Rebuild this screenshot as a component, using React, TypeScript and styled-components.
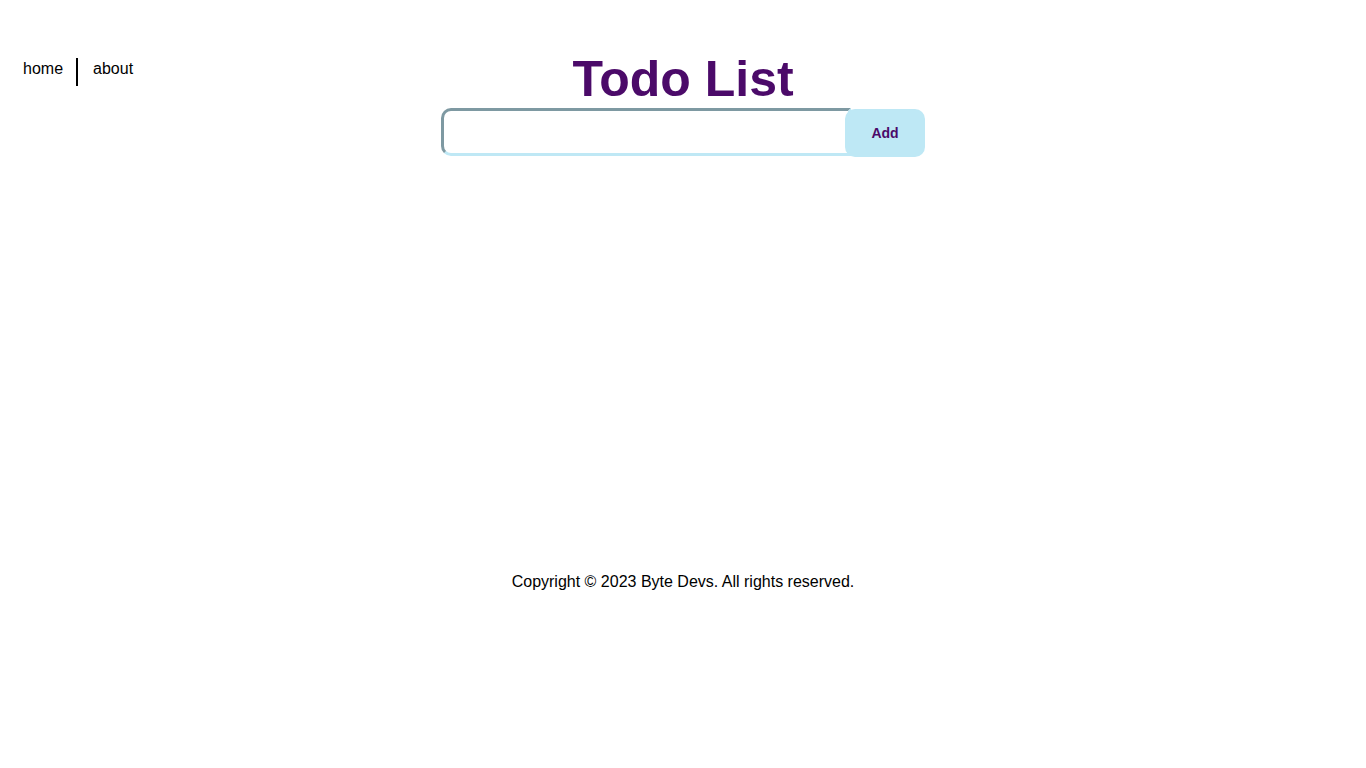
import React from "react";
import styled, { createGlobalStyle } from "styled-components";

const Global = createGlobalStyle`
  html, body { margin: 0; padding: 0; background: #ffffff; }
  body { font-family: "Liberation Sans", Arial, sans-serif; color: #000; }
`;

const Page = styled.div`
  display: flex;
  flex-direction: column;
  min-height: 768px;
`;

const Header = styled.header`
  display: grid;
  grid-template-columns: 1fr auto 1fr;
  align-items: start;
  padding-top: 51px;
`;

const Nav = styled.nav`
  display: flex;
  align-items: flex-start;
  padding-left: 23px;
  margin-top: 7px;
`;

const NavLink = styled.a`
  font-size: 16px;
  line-height: 18px;
  padding-top: 2px;
  color: #000;
  text-decoration: none;
`;

const Divider = styled.span`
  width: 2px;
  height: 28px;
  background: #000;
  margin: 0 15px 0 13px;
`;

const Title = styled.h1`
  margin: 0;
  font-size: 50px;
  line-height: 56px;
  font-weight: 700;
  color: #4b0a69;
  text-align: center;
`;

const Main = styled.main`
  display: flex;
  justify-content: center;
  align-items: flex-start;
  padding-top: 1px;
  min-height: 466px;
  box-sizing: border-box;
`;

const Form = styled.form`
  display: flex;
  align-items: flex-start;
`;

const Input = styled.input`
  box-sizing: border-box;
  width: 410px;
  height: 48px;
  border-width: 3px;
  border-style: solid;
  border-color: #7e99a2 #bfe8f5 #bfe8f5 #7e99a2;
  border-radius: 10px 0 0 10px;
  padding: 0 12px;
  font-size: 16px;
  font-family: inherit;
  outline: none;
  background: #fff;
`;

const AddButton = styled.button`
  box-sizing: border-box;
  width: 80px;
  height: 48px;
  margin-top: 1px;
  margin-left: -6px;
  position: relative;
  border: none;
  border-radius: 10px;
  background: #bee8f5;
  color: #4b0a69;
  font-family: inherit;
  font-size: 14px;
  font-weight: 700;
  cursor: pointer;
`;

const Footer = styled.footer`
  text-align: center;
  font-size: 16px;
  line-height: 18px;
`;

export default function App() {
  return (
    <>
      <Global />
      <Page>
        <Header>
          <Nav>
            <NavLink href="#">home</NavLink>
            <Divider />
            <NavLink href="#">about</NavLink>
          </Nav>
          <Title>Todo List</Title>
          <div />
        </Header>
        <Main>
          <Form onSubmit={(e) => e.preventDefault()}>
            <Input type="text" />
            <AddButton type="submit">Add</AddButton>
          </Form>
        </Main>
        <Footer>Copyright © 2023 Byte Devs. All rights reserved.</Footer>
      </Page>
    </>
  );
}
